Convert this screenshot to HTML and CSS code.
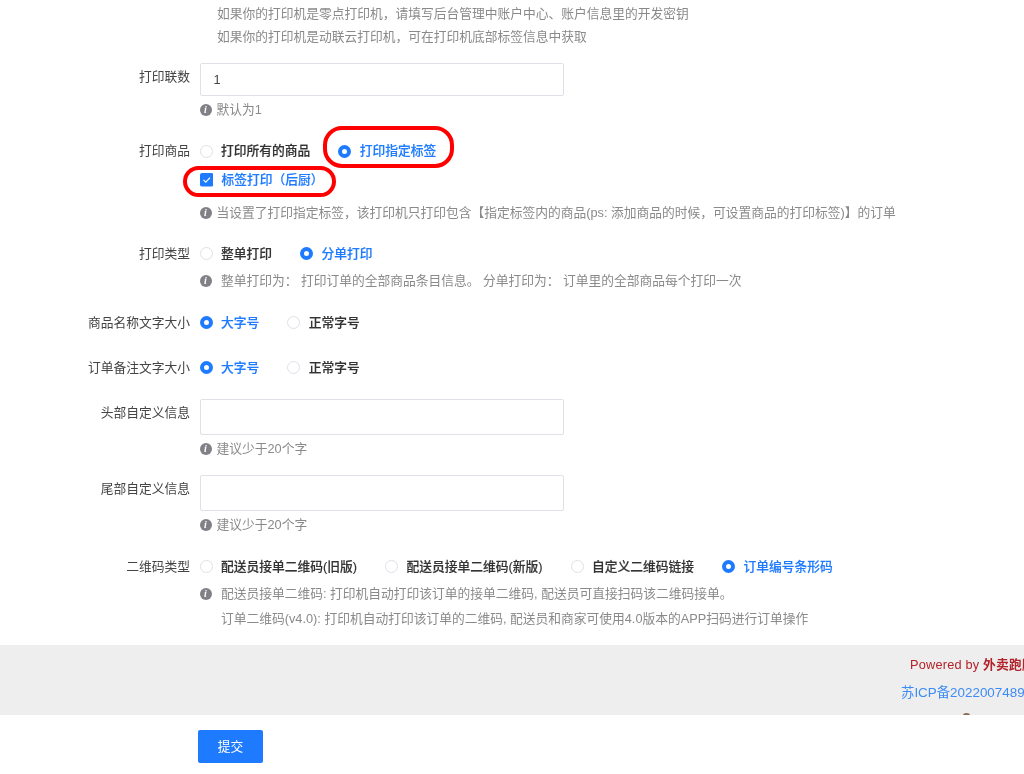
FILE: index.html
```html
<!DOCTYPE html>
<html lang="zh-CN">
<head>
<meta charset="utf-8">
<title>打印设置</title>
<link rel="stylesheet" href="styles.css">
</head>
<body>
<main class="form">
  <div class="intro">
    <p>如果你的打印机是零点打印机，请填写后台管理中账户中心、账户信息里的开发密钥</p>
    <p>如果你的打印机是动联云打印机，可在打印机底部标签信息中获取</p>
  </div>

  <div class="row row-first">
    <label class="label label-input">打印联数</label>
    <div class="control">
      <div class="input">1</div>
      <div class="help"><i class="info">i</i><span>默认为1</span></div>
    </div>
  </div>

  <div class="row row-snug">
    <label class="label">打印商品</label>
    <div class="control">
      <div class="choices">
        <span class="radio"><i class="dot"></i>打印所有的商品</span>
        <span class="radio on"><i class="dot"></i>打印指定标签</span>
      </div>
      <div class="checks"><span class="radio on"><svg class="check" viewBox="0 0 14 14"><rect width="14" height="14" rx="2" fill="#1e7bff"/><path d="M3.6 7.2l2.4 2.3 4.4-4.6" fill="none" stroke="#fff" stroke-width="1.2"/></svg>标签打印（后厨）</span></div>
      <div class="help help-wide"><i class="info">i</i><span>当设置了打印指定标签，该打印机只打印包含【指定标签内的商品(ps: 添加商品的时候，可设置商品的打印标签)】的订单</span></div>
    </div>
  </div>

  <div class="row row-snug">
    <label class="label">打印类型</label>
    <div class="control">
      <div class="choices">
        <span class="radio"><i class="dot"></i>整单打印</span>
        <span class="radio on"><i class="dot"></i>分单打印</span>
      </div>
      <div class="help help-near help-indent"><i class="info">i</i><span>整单打印为： 打印订单的全部商品条目信息。 分单打印为： 订单里的全部商品每个打印一次</span></div>
    </div>
  </div>

  <div class="row">
    <label class="label">商品名称文字大小</label>
    <div class="control choices">
      <span class="radio on"><i class="dot"></i>大字号</span>
      <span class="radio"><i class="dot"></i>正常字号</span>
    </div>
  </div>

  <div class="row row-loose">
    <label class="label">订单备注文字大小</label>
    <div class="control choices">
      <span class="radio on"><i class="dot"></i>大字号</span>
      <span class="radio"><i class="dot"></i>正常字号</span>
    </div>
  </div>

  <div class="row row-tight">
    <label class="label label-input">头部自定义信息</label>
    <div class="control">
      <div class="input input-tall"></div>
      <div class="help"><i class="info">i</i><span>建议少于20个字</span></div>
    </div>
  </div>

  <div class="row row-close">
    <label class="label label-input">尾部自定义信息</label>
    <div class="control">
      <div class="input input-tall"></div>
      <div class="help"><i class="info">i</i><span>建议少于20个字</span></div>
    </div>
  </div>

  <div class="row">
    <label class="label">二维码类型</label>
    <div class="control">
      <div class="choices">
        <span class="radio"><i class="dot"></i>配送员接单二维码(旧版)</span>
        <span class="radio"><i class="dot"></i>配送员接单二维码(新版)</span>
        <span class="radio"><i class="dot"></i>自定义二维码链接</span>
        <span class="radio on"><i class="dot"></i>订单编号条形码</span>
      </div>
      <div class="help help-near help-indent"><i class="info">i</i><div>
        <p>配送员接单二维码: 打印机自动打印该订单的接单二维码, 配送员可直接扫码该二维码接单。</p>
        <p class="help-line">订单二维码(v4.0): 打印机自动打印该订单的二维码, 配送员和商家可使用4.0版本的APP扫码进行订单操作</p>
      </div></div>
    </div>
  </div>
</main>

<footer class="footer">
  <div class="credits">
    <div class="powered">Powered by <b>外卖跑腿系统</b></div>
    <div class="icp">苏ICP备2022007489号-1</div>
  </div>
  <i class="blob"></i>
</footer>

<div class="actions"><button class="submit" type="button">提交</button></div>

<div class="mark mark-radio"></div>
<div class="mark mark-check"></div>
</body>
</html>
```

FILE: styles.css
```css
* { box-sizing: border-box; }
html, body { margin: 0; height: 774px; overflow: hidden; background: #fff; }
body {
  position: relative;
  font-family: "Liberation Sans", "Noto Sans CJK SC", sans-serif;
  font-size: 12.75px;
  line-height: 20px;
  color: #333;
  filter: blur(0.35px);
}
p { margin: 0; }
i { font-style: normal; }

.form { height: 645px; padding-top: 2px; }
.intro { padding-left: 217px; color: #8a8a8a; line-height: 23px; }

.row { display: grid; grid-template-columns: 190px 1fr; column-gap: 9.5px; margin-top: 22px; }
.row-first { margin-top: 15px; }
.row-snug { margin-top: 21px; }
.row-loose { margin-top: 25px; }
.row-tight { margin-top: 21px; }
.row-close { margin-top: 16px; }

.label { text-align: right; color: #444; white-space: nowrap; }
.label-input { line-height: 28px; }

.control { min-width: 0; }
.input {
  width: 364.5px;
  height: 33px;
  padding-left: 13px;
  border: 1px solid #dfe0e8;
  border-radius: 2px;
  line-height: 32px;
  color: #444;
}
.input-tall { height: 36px; }

.choices { display: flex; gap: 28px; }
.checks { margin-top: 9px; }
.radio { display: inline-flex; align-items: center; gap: 8.5px; font-weight: 500; color: #333; white-space: nowrap; -webkit-text-stroke: 0.15px currentColor; }
.radio.on { color: #1e7bff; }
.dot { width: 13px; height: 13px; border: 1px solid #dfe0e8; border-radius: 50%; background: #fff; flex: none; }
.on .dot { border: 4px solid #1e7bff; }
.check { width: 13.5px; height: 13.5px; flex: none; }

.help { display: flex; gap: 5px; margin-top: 4px; color: #8a8a8a; white-space: nowrap; }
.help-wide { margin-top: 10px; }
.help-near { margin-top: 7px; }
.help-indent { gap: 9.5px; }
.help-line { margin-top: 5px; }
.info {
  flex: none;
  width: 12px;
  height: 12px;
  margin-top: 4px;
  border-radius: 50%;
  background: #808086;
  color: #fff;
  font: italic 700 10px/12px "Liberation Serif", serif;
  text-align: center;
}

.footer { position: relative; height: 70px; padding: 10px 0 0 901px; background: #eee; overflow: hidden; }
.credits { display: flex; flex-direction: column; align-items: flex-start; white-space: nowrap; line-height: 20px; }
.powered { margin-left: 9px; color: #b3222a; letter-spacing: 0.2px; }
.powered b { font-weight: 700; }
.icp { margin-top: 8px; color: #3d8bf5; font-size: 13.4px; }
.blob { position: absolute; left: 963px; bottom: -3px; width: 7px; height: 5px; border-radius: 50%; background: #8a6a55; }

.actions { padding: 15px 0 0 198px; }
.submit {
  display: block;
  width: 65px;
  height: 33px;
  padding: 0;
  border: 0;
  border-radius: 2px;
  background: #1e7bff;
  color: #fff;
  font: inherit;
}

.mark { position: absolute; border: 4.5px solid #f00; background: transparent; }
.mark-radio { left: 323px; top: 126px; width: 131px; height: 42px; border-radius: 19px; }
.mark-check { left: 183px; top: 166px; width: 153px; height: 31px; border-radius: 16px; }
```
